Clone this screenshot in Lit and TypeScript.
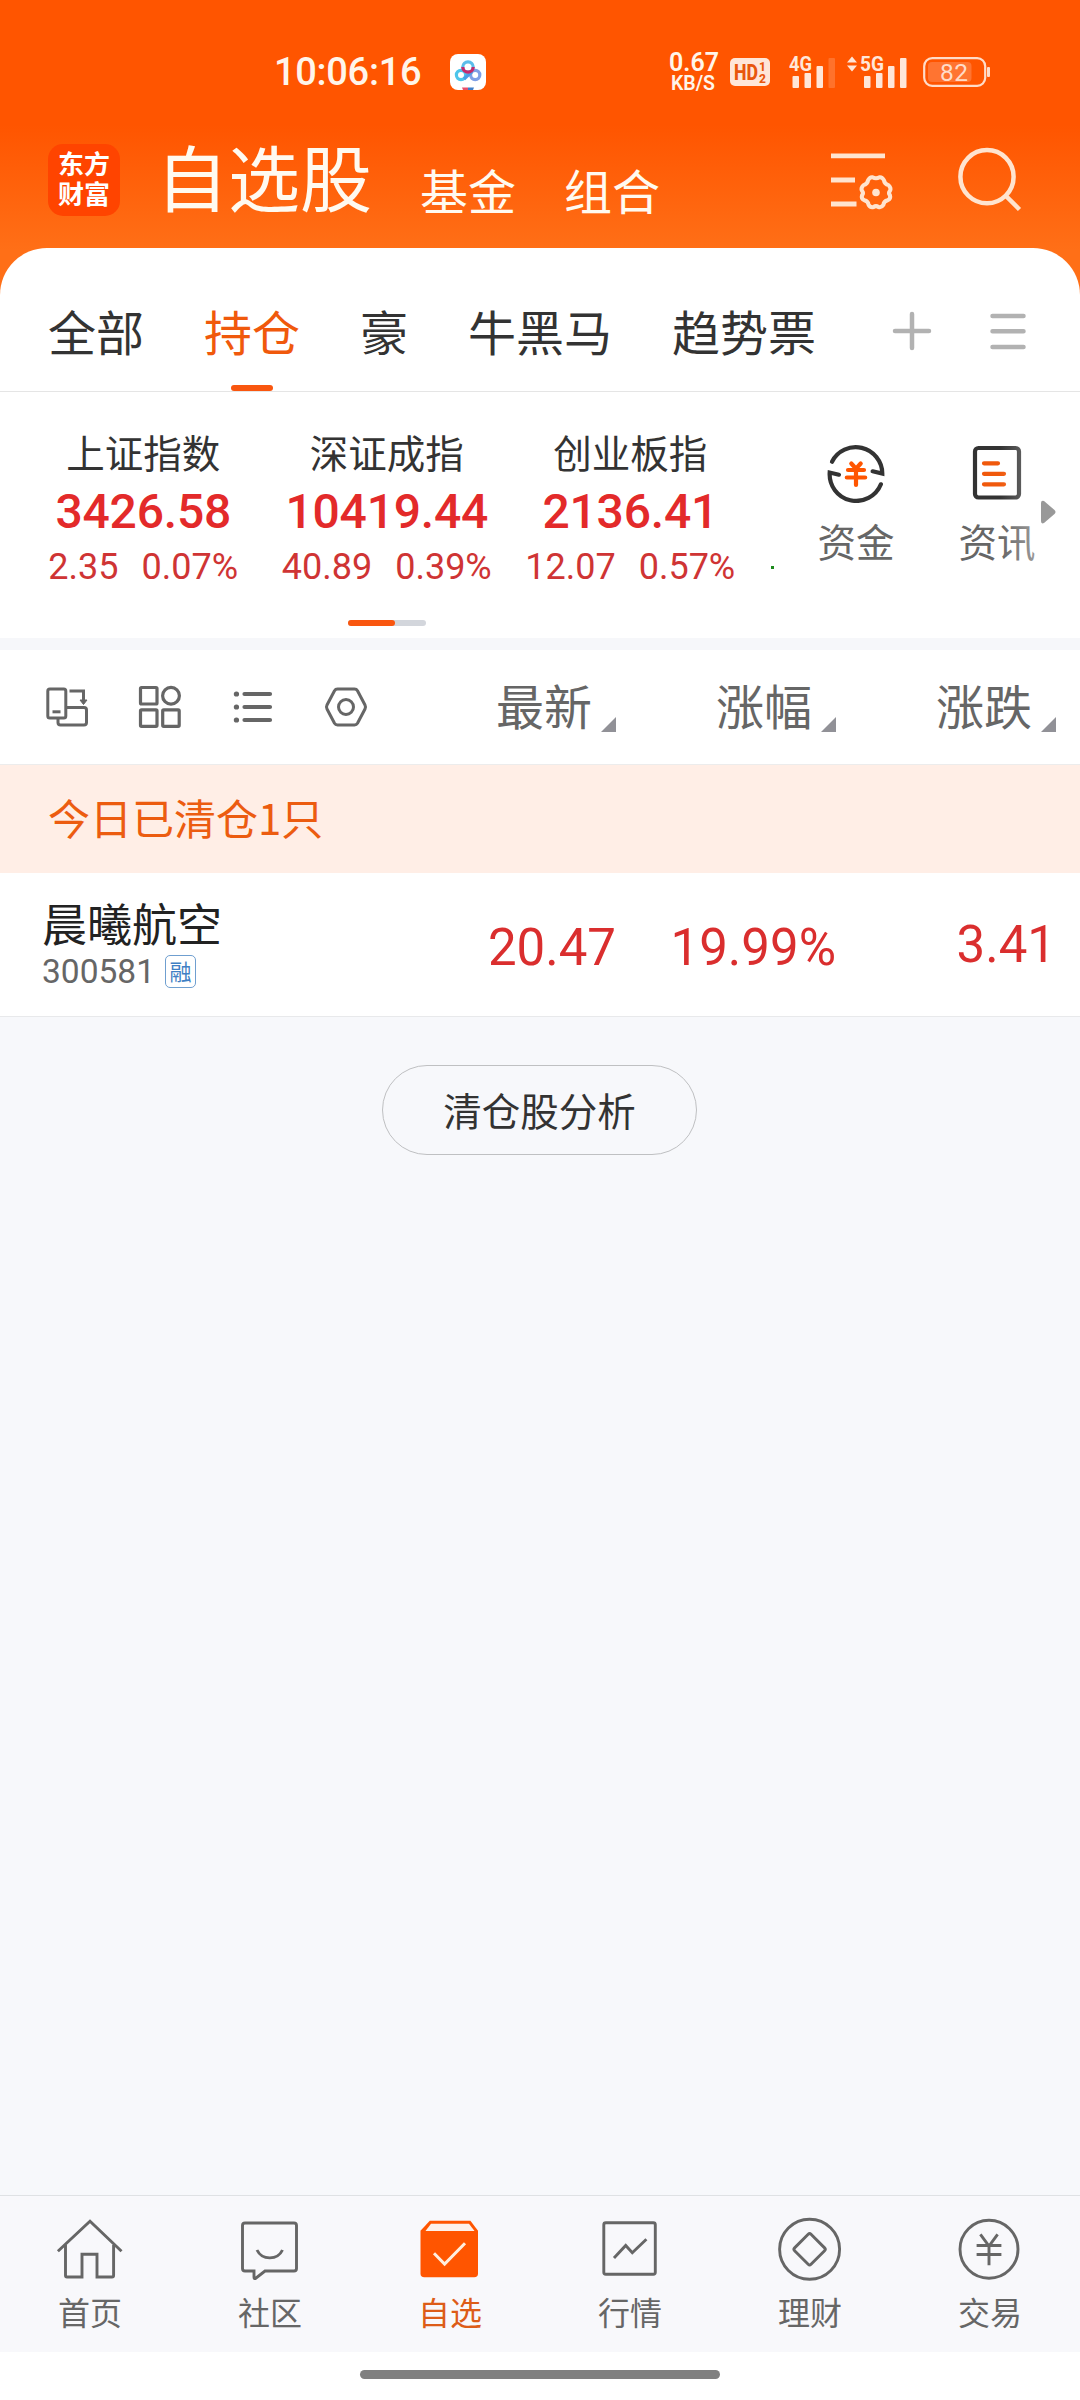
import { LitElement, html, css, svg } from "lit";
import { customElement, property } from "lit/decorators.js";

const GROUPS = ["全部", "持仓", "豪", "牛黑马", "趋势票"];

const INDICES = [
  { name: "上证指数", value: "3426.58", diff: "2.35", pct: "0.07%" },
  { name: "深证成指", value: "10419.44", diff: "40.89", pct: "0.39%" },
  { name: "创业板指", value: "2136.41", diff: "12.07", pct: "0.57%" },
];

const COLUMNS = ["最新", "涨幅", "涨跌"];

const NAV = [
  {
    label: "首页",
    icon: svg`<path d="M3.9 39.2 36 9.2 67.500 39.2"/><path d="M11.5 33V63.5q0 1.5 1.5 1.5H28V42.3H43V65H58q1.6 0 1.6-1.5V33"/>`,
  },
  {
    label: "社区",
    icon: svg`<path d="M11 11H60q2.5 0 2.5 2.5V56.500q0 2.500-2.500 2.500H31L21.500 66.500q-1.500.500-1.500-1.500V59H11q-2.500 0-2.500-2.500V13.500Q8.500 11 11 11Z"/><path d="M23 38C28 48.500 43.500 48.500 48.500 38"/>`,
  },
  {
    label: "自选",
    icon: svg`<path fill="#ff5500" stroke="none" d="M15.800 8.700H56.400L64 18.700V61.500q0 3.800-3.800 3.800H10.300q-3.800 0-3.800-3.800V18.700Z"/><path fill="#fdf1ea" stroke="none" d="M17 11.800H55L60.500 19H11.500Z"/><path stroke="#ffeede" stroke-width="3" d="M20 41.300 30.600 52 51 31.300"/>`,
  },
  {
    label: "行情",
    icon: svg`<rect x="9.800" y="10.800" width="51.500" height="51.500" rx="2"/><path d="M20 46 31.700 33.500 38.300 40.700 52.400 27.300"/>`,
  },
  {
    label: "理财",
    icon: svg`<circle cx="35.600" cy="37.300" r="30"/><rect x="24" y="25.700" width="23.200" height="23.200" rx="2" transform="rotate(45 35.600 37.300)"/>`,
  },
  {
    label: "交易",
    icon: svg`<circle cx="35" cy="37.300" r="29"/><path d="M26.400 22.300 35 34 43.600 22.300M22.600 33.500H47.400M22.600 42.500H47.400M35 33.500V53.300"/>`,
  },
];

@customElement("status-bar")
class StatusBar extends LitElement {
  static styles = css`
    :host {
      display: flex;
      align-items: center;
      height: 144px;
      padding: 0 90px 0 274px;
      color: #fff5ea;
      font-family: Roboto, sans-serif;
    }
    .time {
      width: 176px;
      font-size: 38px;
      font-weight: 500;
      line-height: 44px;
      letter-spacing: -0.3px;
    }
    .grow {
      flex: 1;
    }
    .net {
      width: 48px;
      text-align: center;
      font-weight: 600;
      white-space: nowrap;
    }
    .rate {
      font-size: 25px;
      line-height: 22px;
    }
    .unit {
      font-size: 19.5px;
      line-height: 19px;
    }
    svg {
      display: block;
      font-family: Roboto, sans-serif;
    }
    .hd {
      margin-left: 13px;
    }
    .g4 {
      margin-left: 19px;
    }
    .g5 {
      margin-left: 12px;
    }
    .battery {
      margin-left: 16px;
    }
  `;
  render() {
    return html`
      <div class="time">10:06:16</div>
      <svg width="36" height="36" viewBox="0 0 36 36" fill="none">
        <rect width="36" height="36" rx="8" fill="#fff" />
        <g stroke-width="3.200">
          <circle cx="11" cy="21" r="4.600" stroke="#4cc5ea" />
          <circle cx="25.200" cy="21" r="4.600" stroke="#7e9fe6" />
          <path d="M14 25 22 17.500" stroke="#4a9de6" />
          <circle cx="18" cy="13" r="5.200" stroke="#5cbdea" />
          <path d="M12.800 13a5.200 5.200 0 0 0 10.400 0" stroke="#c42a6e" />
        </g>
        <path d="M12 33.500H18V36H13Z" fill="#e8506a" />
        <path d="M18 33.500H24L23 36H18Z" fill="#3f7fc8" />
      </svg>
      <div class="grow"></div>
      <div class="net">
        <div class="rate">0.67</div>
        <div class="unit">KB/S</div>
      </div>
      <svg class="hd" width="40" height="28" viewBox="0 0 40 28" fill="#e8560c">
        <rect width="40" height="28" rx="5" fill="#ffe6d8" />
        <text x="4" y="22" font-size="22" font-weight="800" textLength="24" lengthAdjust="spacingAndGlyphs">HD</text>
        <text x="29" y="13" font-size="12" font-weight="800">1</text>
        <text x="29" y="25" font-size="12" font-weight="800">2</text>
      </svg>
      <svg class="g4" width="46" height="48" viewBox="0 -9 46 48" fill="#ffe6d8">
        <text x="0" y="14" font-size="20.500" font-weight="700" textLength="23" lengthAdjust="spacingAndGlyphs">4G</text>
        <rect x="3.500" y="19" width="6.500" height="12" rx="1" />
        <rect x="15.500" y="16" width="6.500" height="15" rx="1" />
        <rect x="27.500" y="9" width="6.500" height="22" rx="1" />
        <rect x="39.500" y="1" width="6.500" height="30" rx="1" opacity=".2" />
      </svg>
      <svg class="g5" width="60" height="48" viewBox="0 -9 60 48" fill="#ffe6d8">
        <path d="M5-.500 10 5.500H0ZM5 14.500 0 8.500H10Z" />
        <text x="13" y="14" font-size="20.500" font-weight="700" textLength="24" lengthAdjust="spacingAndGlyphs">5G</text>
        <rect x="17" y="19" width="6.500" height="12" rx="1" />
        <rect x="29" y="16" width="6.500" height="15" rx="1" />
        <rect x="41" y="9" width="6.500" height="22" rx="1" />
        <rect x="53" y="1" width="6.500" height="30" rx="1" />
      </svg>
      <svg class="battery" width="67" height="30" viewBox="0 0 67 30" fill="#ffdcc8">
        <rect x="1.200" y="1.200" width="61" height="27.600" rx="8" fill="none" stroke="#ffdcc8" stroke-width="2.200" />
        <rect x="5" y="5" width="43.500" height="20" rx="4" fill="#ff7431" />
        <rect x="64" y="10" width="3" height="10" rx="1" />
        <text x="17" y="24" font-size="24.500" font-weight="400" textLength="28">82</text>
      </svg>
    `;
  }
}

@customElement("app-header")
class AppHeader extends LitElement {
  static styles = css`
    :host {
      display: flex;
      align-items: flex-start;
      height: 104px;
      padding: 0 54px 0 48px;
      box-sizing: border-box;
      color: #fffaf0;
      font-family: "Noto Sans CJK SC", sans-serif;
      white-space: nowrap;
    }
    .logo {
      width: 72px;
      height: 72px;
      box-sizing: border-box;
      padding-top: 4px;
      border-radius: 15px;
      background: #ff4400;
      color: #fff;
      font-size: 26px;
      font-weight: 700;
      line-height: 30px;
      text-align: center;
    }
    .title {
      margin: -5px 0 0 36px;
      font-size: 72px;
      line-height: 72px;
    }
    .link {
      margin-top: 21px;
      font-size: 48px;
      line-height: 48px;
    }
    .fund {
      margin-left: 48px;
    }
    .combo {
      margin-left: 48px;
    }
    .grow {
      flex: 1;
    }
    svg {
      display: block;
    }
    .search {
      margin-left: 60px;
    }
  `;
  render() {
    return html`
      <div class="logo">东方<br />财富</div>
      <div class="title">自选股</div>
      <div class="link fund">基金</div>
      <div class="link combo">组合</div>
      <div class="grow"></div>
      <svg width="66" height="72" viewBox="0 0 66 72" fill="none" stroke="#ffe4cf" stroke-width="4.800">
        <path d="M1 11.800H55M1 36H25M1 60H26.500" />
        <path
          stroke-width="4"
          stroke-linejoin="round"
          d="M42.500 33.200q3.500 2 7 0 2.600-.400 4.300 2.700.700 4.300 4.700 5.200 3 2.900 1.500 5.600-2 2.300 0 4.600 1 3.300-2.300 5-4 .900-4.300 4.600-2 3-4.900 2.100-2.500-1.700-5 0-3 .900-4.900-2.100-.400-3.700-4.300-4.600-3.300-1.700-2.300-5 2-2.300 0-4.600-1.500-2.700 1.500-5.600 4-.900 4.700-5.200 1.700-3.100 4.300-2.700Z"
        />
        <circle cx="46" cy="48.500" r="3.800" fill="#ffe4cf" stroke="none" />
      </svg>
      <svg class="search" width="70" height="72" viewBox="0 0 70 72" fill="none" stroke="#ffe4cf" stroke-width="4.500">
        <circle cx="31" cy="32.700" r="26.600" />
        <path d="M50 52 63.500 65.500" />
      </svg>
    `;
  }
}

@customElement("group-tabs")
class GroupTabs extends LitElement {
  @property() active = "持仓";
  static styles = css`
    :host {
      display: flex;
      height: 144px;
      box-sizing: border-box;
      padding: 0 54px 0 48px;
      border-bottom: 1px solid #e5e5e5;
      background: #fff;
      border-radius: 47px 47px 0 0;
      font-family: "Noto Sans CJK SC", sans-serif;
      font-size: 48px;
      color: #333;
      white-space: nowrap;
    }
    .tabs {
      display: flex;
      gap: 60px;
      flex: 1;
    }
    .tab {
      display: flex;
      flex-direction: column;
      align-items: center;
      justify-content: space-between;
      padding-top: 58px;
      line-height: 49px;
    }
    .tab.on {
      color: #f0590c;
    }
    .bar {
      width: 42px;
      height: 6px;
      border-radius: 3px;
    }
    .on .bar {
      background: #f9560f;
    }
    svg {
      display: block;
      margin-top: 63px;
    }
    .menu {
      margin-left: 58px;
    }
  `;
  render() {
    return html`
      <div class="tabs">
        ${GROUPS.map(
          (g) => html`<div class="tab ${g === this.active ? "on" : ""}">
            <span>${g}</span><span class="bar"></span>
          </div>`
        )}
      </div>
      <svg width="40" height="40" viewBox="0 0 40 40" stroke="#b2b2b2" stroke-width="4.500" stroke-linecap="round">
        <path d="M20 3V37M3 20H37" />
      </svg>
      <svg class="menu" width="36" height="40" viewBox="0 0 36 40" stroke="#b2b2b2" stroke-width="4.500" stroke-linecap="round">
        <path d="M2.500 5H33.500M2.500 20.300H33.500M2.500 36H33.500" />
      </svg>
    `;
  }
}

@customElement("index-panel")
class IndexPanel extends LitElement {
  static styles = css`
    :host {
      position: relative;
      display: flex;
      height: 246px;
      box-sizing: border-box;
      padding: 34px 12.5px 0 21.5px;
      background: #fff;
      font-family: Roboto, sans-serif;
      color: #cf3434;
    }
    .left {
      display: flex;
      flex-direction: column;
      align-items: center;
    }
    .cards {
      display: flex;
    }
    .card {
      width: 243.5px;
      text-align: center;
      white-space: nowrap;
    }
    .name {
      font-family: "Noto Sans CJK SC", sans-serif;
      font-size: 38.500px;
      line-height: 50px;
      color: #333;
    }
    .value {
      padding-top: 1px;
      font-size: 48px;
      font-weight: 500;
      letter-spacing: -0.2px;
      line-height: 70px;
      color: #e32a2a;
    }
    .change {
      display: flex;
      justify-content: center;
      gap: 23px;
      font-size: 36px;
      line-height: 41px;
    }
    .pager {
      display: flex;
      width: 78px;
      height: 6px;
      margin-top: 32px;
      border-radius: 3px;
      background: #d3d6dc;
    }
    .pager span {
      width: 47px;
      border-radius: 3px;
      background: #f9560f;
    }
    .dot {
      width: 3px;
      height: 3px;
      margin: 140px 0 0 19px;
      background: #1d8a1d;
    }
    .shortcuts {
      display: flex;
      margin-left: auto;
      font-family: "Noto Sans CJK SC", sans-serif;
      font-size: 38.500px;
      color: #666;
    }
    .shortcut {
      display: flex;
      flex-direction: column;
      align-items: center;
      width: 141px;
      padding-top: 17px;
      line-height: 50px;
      gap: 12px;
    }
    .fade {
      position: absolute;
      right: 38px;
      top: 40px;
      width: 42px;
      height: 140px;
      background: linear-gradient(90deg, rgba(255, 255, 255, 0), rgba(255, 255, 255, 0.4));
    }
    .more {
      position: absolute;
      right: 24px;
      top: 108px;
    }
  `;
  render() {
    return html`
      <div class="left">
        <div class="cards">
          ${INDICES.map(
            (i) => html`<div class="card">
              <div class="name">${i.name}</div>
              <div class="value">${i.value}</div>
              <div class="change"><span>${i.diff}</span><span>${i.pct}</span></div>
            </div>`
          )}
        </div>
        <div class="pager"><span></span></div>
      </div>
      <div class="dot"></div>
      <div class="shortcuts">
        <div class="shortcut">
          <svg width="60" height="60" viewBox="0 0 60 60" fill="none" stroke-width="4.200" stroke-linecap="round">
            <g stroke="#333">
              <path d="M6 18.700A26.600 26.600 0 0 1 56.300 30.500L46.600 28.300" stroke-linejoin="miter" />
              <path d="M54.900 41.300A26.600 26.600 0 0 1 3.700 29.500L12.900 31.700" />
            </g>
            <path stroke="#ff5500" d="M25.300 20.500 30 25.700 34.700 20.500M22 27H38M20.800 34.500H39.200M30 26V42" />
          </svg>
          <span>资金</span>
        </div>
        <div class="shortcut">
          <svg width="60" height="60" viewBox="0 0 60 60" fill="none" stroke-width="4.200" stroke-linecap="round">
            <rect x="8" y="5" width="44" height="49.500" rx="3.500" stroke="#333" />
            <path stroke="#f0590c" d="M17 20.300H31M17 30.800H37M17 41.300H37" />
          </svg>
          <span>资讯</span>
        </div>
      </div>
      <div class="fade"></div>
      <svg class="more" width="15" height="24" viewBox="0 0 15 24">
        <path fill="#999" d="M0 3Q0 0 3 1L13.500 10Q15.500 12 13.500 14L3 23Q0 24.500 0 21Z" />
      </svg>
    `;
  }
}

@customElement("holdings-table")
class HoldingsTable extends LitElement {
  static styles = css`
    :host {
      display: block;
      background: #fff;
      font-family: "Noto Sans CJK SC", sans-serif;
      white-space: nowrap;
    }
    .head,
    .row {
      display: grid;
      grid-template-columns: 396px 220px 220px 220px;
      padding-right: 24px;
      box-sizing: border-box;
    }
    .head {
      height: 115px;
      border-bottom: 1px solid #ececec;
      font-size: 48px;
      line-height: 48px;
      color: #666;
    }
    .tools {
      display: flex;
      gap: 49px;
      padding: 35px 0 0 45px;
    }
    .tools svg {
      display: block;
    }
    .col {
      display: flex;
      justify-content: flex-end;
      gap: 9px;
      padding-top: 30px;
    }
    .sort {
      width: 15px;
      height: 15px;
      margin-top: 37px;
      background: #919197;
      clip-path: polygon(100% 0, 100% 100%, 0 100%);
    }
    .notice {
      height: 108px;
      padding-left: 48px;
      background: #ffeee6;
      color: #ec5c10;
      font-size: 42px;
      line-height: 103px;
    }
    .row {
      height: 144px;
      border-bottom: 1px solid #e8e9eb;
    }
    .stock {
      display: flex;
      flex-direction: column;
      gap: 6px;
      padding: 25px 0 0 42px;
    }
    .name {
      font-size: 45px;
      line-height: 50px;
      color: #222;
    }
    .meta {
      display: flex;
      align-items: center;
      gap: 10px;
      font-family: Roboto, sans-serif;
      font-size: 33.5px;
      line-height: 35px;
      color: #666;
    }
    .badge {
      width: 31px;
      height: 33px;
      box-sizing: border-box;
      border: 1.5px solid #6f9fd0;
      border-radius: 5px;
      font-family: "Noto Sans CJK SC", sans-serif;
      font-size: 22px;
      line-height: 28px;
      text-align: center;
      color: #3f7fc4;
    }
    .num {
      padding-top: 45px;
      font-family: Roboto, sans-serif;
      font-size: 51px;
      line-height: 60px;
      text-align: right;
      color: #da2e2e;
    }
    .num.last {
      padding-top: 42px;
    }
  `;
  render() {
    return html`
      <div class="head">
        <div class="tools">
          <svg width="44" height="44" viewBox="0 0 44 44" fill="none" stroke="#666" stroke-width="3">
            <rect x="2.800" y="4" width="18" height="29" rx="2" />
            <path d="M7.500 26.800H15.500" />
            <path d="M24.500 6H38.500V16" />
            <path d="M35 15H42L38.500 19.500Z" fill="#666" stroke-width="1" />
            <path d="M13 33V37.500q0 2.500 2.500 2.500H39q2.500 0 2.500-2.500V25q0-2.500-2.500-2.500H21" />
          </svg>
          <svg width="44" height="44" viewBox="0 0 44 44" fill="none" stroke="#666" stroke-width="3.200">
            <rect x="2.500" y="2.500" width="16.500" height="16.500" rx="1" />
            <circle cx="33" cy="10.800" r="8.400" />
            <rect x="2.500" y="24.800" width="16.500" height="16.500" rx="1" />
            <rect x="24.700" y="24.800" width="16.500" height="16.500" rx="1" />
          </svg>
          <svg width="44" height="44" viewBox="0 0 44 44" fill="none" stroke="#666" stroke-width="4.200" stroke-linecap="round">
            <path d="M13.500 9H39M13.500 22H39M13.500 35H39" />
            <path stroke-width="5.200" d="M5.400 9H5.500M5.400 22H5.500M5.400 35H5.500" />
          </svg>
          <svg width="44" height="44" viewBox="0 0 44 44" fill="none" stroke="#666" stroke-width="3" stroke-linejoin="round">
            <path d="M13.500 4H30.500q2 0 3 1.700L41 20q1 2 0 4L33.500 38.300q-1 1.700-3 1.700H13.500q-2 0-3-1.700L3 24q-1-2 0-4L10.500 5.700q1-1.700 3-1.700Z" />
            <circle cx="22" cy="22" r="7.500" />
          </svg>
        </div>
        ${COLUMNS.map((c) => html`<div class="col"><span>${c}</span><span class="sort"></span></div>`)}
      </div>
      <div class="notice">今日已清仓1只</div>
      <div class="row">
        <div class="stock">
          <div class="name">晨曦航空</div>
          <div class="meta"><span>300581</span><span class="badge">融</span></div>
        </div>
        <div class="num">20.47</div>
        <div class="num">19.99%</div>
        <div class="num last">3.41</div>
      </div>
    `;
  }
}

@customElement("bottom-nav")
class BottomNav extends LitElement {
  @property() active = "自选";
  static styles = css`
    :host {
      display: flex;
      height: 157px;
      box-sizing: border-box;
      border-top: 1px solid #dfe1e4;
      background: #f8f8fb;
      font-family: "Noto Sans CJK SC", sans-serif;
      font-size: 32px;
      line-height: 40px;
      color: #666;
    }
    .item {
      flex: 1;
      display: flex;
      flex-direction: column;
      align-items: center;
      padding-top: 16px;
      gap: 7px;
    }
    .item.on {
      color: #dd5c18;
    }
    svg {
      display: block;
    }
  `;
  render() {
    return NAV.map(
      (n) => html`<div class="item ${n.label === this.active ? "on" : ""}">
        <svg width="72" height="72" viewBox="0 0 72 72" fill="none" stroke="#666" stroke-width="2.900">${n.icon}</svg>
        <span>${n.label}</span>
      </div>`
    );
  }
}

@customElement("app-root")
class AppRoot extends LitElement {
  static styles = css`
    :host {
      display: flex;
      flex-direction: column;
      width: 1080px;
      height: 2400px;
      overflow: hidden;
      background: #f7f8fb;
    }
    .top {
      background: linear-gradient(#ff5500 0, #ff5500 125px, #ff6f17 250px, #ff6f17 100%);
    }
    .gap {
      height: 12px;
      background: #f6f7fa;
    }
    .body {
      flex: 1;
      display: flex;
      flex-direction: column;
      align-items: center;
      padding-top: 48px;
    }
    .analysis {
      width: 315px;
      height: 90px;
      box-sizing: border-box;
      padding: 0;
      margin-right: 1px;
      border: 1px solid #bfc0c2;
      border-radius: 45px;
      background: transparent;
      font-family: "Noto Sans CJK SC", sans-serif;
      font-size: 38.500px;
      line-height: 86px;
      text-align: center;
      color: #333;
    }
    .gesture {
      display: flex;
      justify-content: center;
      height: 30px;
      padding-top: 18px;
      background: #fff;
    }
    .pill {
      width: 360px;
      height: 9px;
      border-radius: 5px;
      background: #808080;
    }
  `;
  render() {
    return html`
      <div class="top">
        <status-bar></status-bar>
        <app-header></app-header>
        <group-tabs></group-tabs>
      </div>
      <index-panel></index-panel>
      <div class="gap"></div>
      <holdings-table></holdings-table>
      <div class="body"><div class="analysis">清仓股分析</div></div>
      <bottom-nav></bottom-nav>
      <div class="gesture"><div class="pill"></div></div>
    `;
  }
}
